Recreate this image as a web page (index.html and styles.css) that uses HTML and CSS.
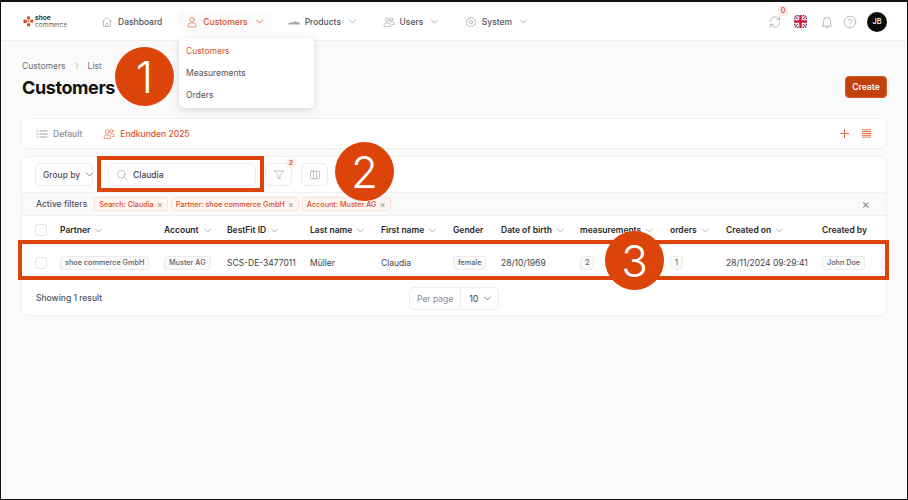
FILE: index.html
```html
<!DOCTYPE html>
<html lang="en">
<head>
<meta charset="utf-8">
<title>Customers</title>
<link rel="stylesheet" href="styles.css">
</head>
<body>
<div class="frame">
  <header class="nav">
    <div class="logo">
      <svg class="logo-mark" viewBox="0 0 12 12" width="11" height="11"><g fill="#e0441a"><rect x="4.500" y="0.500" width="3.200" height="3.200"/><rect x="8" y="4" width="3.200" height="3.200"/><rect x="0.500" y="4" width="3.600" height="3.600"/><rect x="4.500" y="8" width="3.200" height="3.200"/><rect x="4.700" y="4.600" width="2.200" height="2.200" fill="#f08a60"/></g></svg>
      <div class="logo-text"><b>shoe</b><span>commerce</span></div>
    </div>
    <nav class="menu">
      <a class="item">
        <svg class="ic" viewBox="0 0 24 24"><path d="M3 11l9-8 9 8M5 9.500V21h14V9.500M10 21v-6h4v6"/></svg>Dashboard
      </a>
      <a class="item active">
        <svg class="ic" viewBox="0 0 24 24"><circle cx="12" cy="7.500" r="4.500"/><path d="M4 21v-2a5 5 0 0 1 5-5h6a5 5 0 0 1 5 5v2z"/></svg>Customers
        <svg class="chev" viewBox="0 0 12 12"><path d="M2 4l4 4 4-4"/></svg>
      </a>
      <a class="item">
        <svg class="ic shoe" viewBox="0 0 24 24"><path d="M1 17h22v-4l-6-1-3-2-2 1-2 2H6l-5 1z"/></svg>Products
        <svg class="chev" viewBox="0 0 12 12"><path d="M2 4l4 4 4-4"/></svg>
      </a>
      <a class="item">
        <svg class="ic" viewBox="0 0 24 24"><circle cx="8.500" cy="7.500" r="3.800"/><circle cx="17" cy="6" r="3"/><path d="M2 20v-1a5 5 0 0 1 5-5h3a5 5 0 0 1 5 5v1zM15 11.500h3a4.500 4.500 0 0 1 4.500 4.500v1H18"/></svg>Users
        <svg class="chev" viewBox="0 0 12 12"><path d="M2 4l4 4 4-4"/></svg>
      </a>
      <a class="item">
        <svg class="ic" viewBox="0 0 24 24"><circle cx="12" cy="12" r="3.200"/><path d="M12 2.500l2 2.500 3.200-.6 1 3 3 1.100-.6 3.500 1.400 1-1.400 2-.2 2.500-3 .5-1.700 2.500L12 19.800l-3.700 1.200-1.700-2.500-3-.5-.2-2.500-1.400-2 1.400-1-.6-3.500 3-1.100 1-3L10 5z"/></svg>System
        <svg class="chev" viewBox="0 0 12 12"><path d="M2 4l4 4 4-4"/></svg>
      </a>
    </nav>
    <div class="tools">
      <span class="sync">
        <svg class="tool" viewBox="0 0 24 24"><path d="M4 11a8 8 0 0 1 14-5l2 2M20 3v5h-5M20 13a8 8 0 0 1-14 5l-2-2M4 21v-5h5"/></svg>
        <i class="count">0</i>
      </span>
      <svg class="flag" viewBox="0 0 24 24"><defs><clipPath id="fc"><rect width="24" height="24" rx="6"/></clipPath></defs><g clip-path="url(#fc)"><rect width="24" height="24" fill="#23327d"/><path d="M0 0l24 24M24 0L0 24" stroke="#fff" stroke-width="6"/><path d="M0 0l24 24M24 0L0 24" stroke="#d3163a" stroke-width="2"/><path d="M12 0v24M0 12h24" stroke="#fff" stroke-width="8"/><path d="M12 0v24M0 12h24" stroke="#d3163a" stroke-width="4.500"/></g></svg>
      <svg class="tool" viewBox="0 0 24 24"><path d="M6 17V10a6 6 0 0 1 12 0v7l2 2H4zM10 21.500h4"/></svg>
      <svg class="tool" viewBox="0 0 24 24"><circle cx="12" cy="12" r="10"/><path d="M9 9.500a3 3 0 1 1 4.500 2.600c-1 .6-1.500 1.200-1.500 2.400M12 17.500v.5"/></svg>
      <span class="avatar">JB</span>
    </div>
  </header>

  <main class="page">
    <div class="head">
      <div class="titles">
        <div class="crumbs"><span>Customers</span><svg class="crumb-sep" viewBox="0 0 12 12"><path d="M4 2l4 4-4 4"/></svg><span>List</span></div>
        <h1>Customers</h1>
      </div>
      <button class="create">Create</button>
    </div>

    <section class="tabs">
      <a class="tab">
        <svg class="ic list" viewBox="0 0 24 24"><path d="M8 6h14M8 12h14M8 18h14M2 6h2M2 12h2M2 18h2"/></svg>Default
      </a>
      <a class="tab on">
        <svg class="ic" viewBox="0 0 24 24"><circle cx="8.500" cy="7.500" r="3.800"/><circle cx="17" cy="6" r="3"/><path d="M2 20v-1a5 5 0 0 1 5-5h3a5 5 0 0 1 5 5v1zM15 11.500h3a4.500 4.500 0 0 1 4.500 4.500v1H18"/></svg>Endkunden 2025
      </a>
      <span class="tab-actions">
        <svg class="act" viewBox="0 0 12 12"><path d="M6 1.500v9M1.500 6h9"/></svg>
        <svg class="act" viewBox="0 0 12 12"><path d="M1.500 2h9M1.500 4h9M1.500 6h9M1.500 8h9M1.500 10h9"/></svg>
      </span>
    </section>

    <section class="card">
      <div class="toolbar">
        <button class="group">Group by<svg class="chev dark" viewBox="0 0 12 12"><path d="M2 4l4 4 4-4"/></svg></button>
        <label class="search">
          <svg class="ic" viewBox="0 0 24 24"><circle cx="10.500" cy="10.500" r="7.500"/><path d="M16 16l6 6"/></svg>
          <span>Claudia</span>
        </label>
        <button class="square">
          <svg class="ic" viewBox="0 0 24 24"><path d="M3 4h18l-7 8.500V20l-4-2v-5.500z"/></svg>
          <i class="count">2</i>
        </button>
        <button class="square">
          <svg class="ic" viewBox="0 0 24 24"><rect x="3" y="4.500" width="18" height="15" rx="2"/><path d="M9 4.500v15M15 4.500v15"/></svg>
        </button>
      </div>
      <div class="filters">
        <span class="flabel">Active filters</span>
        <span class="chip">Search: Claudia<em>×</em></span>
        <span class="chip">Partner: shoe commerce GmbH<em>×</em></span>
        <span class="chip">Account: Muster AG<em>×</em></span>
        <span class="clear">×</span>
      </div>
      <div class="table">
        <div class="row hdr">
          <span><i class="check"></i></span>
          <span>Partner<svg class="chev" viewBox="0 0 12 12"><path d="M2 4l4 4 4-4"/></svg></span>
          <span>Account<svg class="chev" viewBox="0 0 12 12"><path d="M2 4l4 4 4-4"/></svg></span>
          <span>BestFit ID<svg class="chev" viewBox="0 0 12 12"><path d="M2 4l4 4 4-4"/></svg></span>
          <span>Last name<svg class="chev" viewBox="0 0 12 12"><path d="M2 4l4 4 4-4"/></svg></span>
          <span>First name<svg class="chev" viewBox="0 0 12 12"><path d="M2 4l4 4 4-4"/></svg></span>
          <span>Gender</span>
          <span>Date of birth<svg class="chev" viewBox="0 0 12 12"><path d="M2 4l4 4 4-4"/></svg></span>
          <span>measurements<svg class="chev" viewBox="0 0 12 12"><path d="M2 4l4 4 4-4"/></svg></span>
          <span>orders<svg class="chev" viewBox="0 0 12 12"><path d="M2 4l4 4 4-4"/></svg></span>
          <span>Created on<svg class="chev" viewBox="0 0 12 12"><path d="M2 4l4 4 4-4"/></svg></span>
          <span>Created by</span>
          <span></span>
        </div>
        <div class="row body">
          <span><i class="check"></i></span>
          <span><b class="pill">shoe commerce GmbH</b></span>
          <span><b class="pill">Muster AG</b></span>
          <span>SCS-DE-3477011</span>
          <span>Müller</span>
          <span>Claudia</span>
          <span><b class="pill">female</b></span>
          <span>28/10/1969</span>
          <span><b class="pill">2</b></span>
          <span><b class="pill">1</b></span>
          <span>28/11/2024 09:29:41</span>
          <span><b class="pill">John Doe</b></span>
          <span><b class="pill stub"></b></span>
        </div>
      </div>
      <div class="foot">
        <span class="showing">Showing 1 result</span>
        <div class="pager"><span class="pp">Per page</span><span class="pv">10<svg class="chev dark" viewBox="0 0 12 12"><path d="M2 4l4 4 4-4"/></svg></span></div>
      </div>
    </section>
  </main>

  <div class="dropdown">
    <a class="on">Customers</a>
    <a>Measurements</a>
    <a>Orders</a>
  </div>

  <div class="mark box-search"></div>
  <div class="mark box-row"></div>
  <div class="bubble b1">1</div>
  <div class="bubble b2">2</div>
  <div class="bubble b3">3</div>
</div>
</body>
</html>
```

FILE: styles.css
```css
* { box-sizing: border-box; }
html, body { margin: 0; padding: 0; }
body { font-family: Inter, "Liberation Sans", sans-serif; color: #3f3f46; background: #fff; }
svg { fill: none; stroke: currentColor; stroke-linecap: round; stroke-linejoin: round; flex: none; }
.frame { position: relative; width: 908px; height: 500px; background: #fafafa; border: 1px solid #111; border-top-width: 2px; overflow: hidden; font-size: 8.500px; }

.nav { display: flex; align-items: center; height: 39px; padding: 1px 20px 0 22px; background: #fff; border-bottom: 1px solid #efefef; }
.logo { display: flex; align-items: center; gap: 1px; width: 78px; }
.logo-mark { stroke: none; }
.logo-mark rect { stroke: none; }
.logo-text { display: flex; flex-direction: column; font-size: 6.500px; line-height: 6.500px; color: #333; }
.logo-text b { font-weight: 700; }
.logo-text span { font-weight: 300; }
.menu { display: flex; align-items: center; gap: 16px; }
.item { display: flex; align-items: center; gap: 5px; height: 21px; color: #52525b; font-weight: 500; font-size: 8.500px; }
.item.active { color: #d9502a; background: #fafafa; border-radius: 6px; padding-left: 8px; }
.ic { width: 12px; height: 12px; stroke-width: 1.300; color: #a1a1aa; }
.item.active .ic { color: #e0643c; }
.shoe { color: #a1a1aa; fill: #a1a1aa; stroke: none; }
.chev { width: 9px; height: 9px; stroke-width: 1.100; color: #a1a1aa; margin-left: 4px; }
.item .chev { margin-left: 2px; margin-right: 9.500px; }
.item.active .chev { color: #d9502a; margin-right: 8px; }
.chev.dark { color: #71717a; }

.tools { display: flex; align-items: center; gap: 9px; margin-left: auto; }
.tool { width: 14px; height: 14px; stroke-width: 1.300; color: #a8a8ae; }
.flag { width: 13px; height: 13px; stroke: none; margin-right: 4px; }
.flag path { fill: none; }
.sync { position: relative; display: flex; margin-right: 3px; }
.count { position: absolute; top: -9px; right: -6px; min-width: 10px; height: 10px; border-radius: 3px; background: #fdeee8; color: #d9502a; font-size: 7px; font-style: normal; font-weight: 600; line-height: 10px; text-align: center; }
.avatar { width: 20px; height: 20px; border-radius: 50%; background: #0a0a0a; color: #fff; font-size: 7.500px; font-weight: 500; display: flex; align-items: center; justify-content: center; margin-left: 1px; }

.page { padding: 0 20px; }
.head { display: flex; justify-content: space-between; align-items: flex-end; height: 57px; margin-bottom: 20px; }
.titles { padding-left: 1px; }
.crumbs { display: flex; align-items: center; gap: 6px; color: #71717a; font-size: 8.500px; margin-bottom: 6px; }
.crumb-sep { width: 8px; height: 8px; color: #a1a1aa; stroke-width: 1.100; margin: 0 1px; }
h1 { margin: 0 0 -1px; font-size: 18px; line-height: 22px; font-weight: 700; color: #111; letter-spacing: -0.400px; }
.create { height: 22px; width: 42px; padding: 0; border: 1px solid #d9542a; border-radius: 4px; background: #c2410c; color: #fff; font: 600 8.500px Inter, sans-serif; }

.tabs { display: flex; align-items: center; height: 31px; padding: 0 14px; gap: 21px; background: #fff; border: 1px solid #f0f0f0; border-radius: 7px; margin-bottom: 7px; }
.tab { display: flex; align-items: center; gap: 5px; color: #8b8b92; font-weight: 500; font-size: 8.500px; }
.tab.on { color: #d9502a; font-weight: 500; }
.tab.on .ic { color: #e0643c; }
.list { color: #71717a; }
.tab-actions { margin-left: auto; display: flex; gap: 11px; color: #e0643c; }
.act { width: 11px; height: 11px; stroke-width: 1; }

.card { background: #fff; border: 1px solid #efefef; border-radius: 7px; overflow: hidden; height: 160px; }
.toolbar { display: flex; align-items: center; height: 36px; padding: 0 13px; border-bottom: 1px solid #f0f0f0; }
.group { display: flex; align-items: center; gap: 1px; height: 23px; width: 58px; padding: 0 0 0 7px; border: 1px solid #ececec; border-radius: 5px; background: #fff; color: #52525b; font: 500 8.500px Inter, sans-serif; white-space: nowrap; margin-right: 15px; }
.search { display: flex; align-items: center; gap: 5px; width: 148px; height: 23px; padding: 0 7px; border: 1px solid #ececec; border-radius: 6px; color: #3f3f46; font-weight: 500; margin-right: 9px; }
.square { position: relative; display: flex; align-items: center; justify-content: center; width: 27px; height: 23px; border: 1px solid #ececec; border-radius: 5px; background: #fff; padding: 0; margin-right: 9px; }
.square .count { top: -6px; right: -5px; }
.filters { display: flex; align-items: center; gap: 3px; height: 23px; padding: 0 14px; background: #fafafa; border-bottom: 1px solid #efefef; }
.flabel { font-weight: 500; font-size: 8.500px; color: #52525b; margin-right: 4px; }
.chip { display: flex; align-items: center; gap: 3px; height: 14px; padding: 0 4px; background: #fef4f0; border: 1px solid #f8e2d9; border-radius: 3px; color: #d9502a; font-size: 7.250px; font-weight: 500; white-space: nowrap; }
.chip em { font-style: normal; font-size: 9px; color: #a1a1aa; line-height: 1; }
.clear { margin-left: auto; margin-right: 2px; color: #8b8b92; font-size: 13px; line-height: 1; }

.table { overflow: hidden; }
.row { display: grid; grid-template-columns: 25px 104px 63px 83px 71px 72px 48px 79px 90px 56px 96px 59px 30px; width: 889px; align-items: center; padding-left: 13px; border-bottom: 1px solid #f2f2f2; }
.row > span { display: flex; align-items: center; white-space: nowrap; }
.hdr { height: 29px; font-weight: 600; font-size: 8.500px; color: #27272a; }
.body { height: 35px; padding-top: 1px; color: #3f3f46; font-size: 8.500px; }
.check { display: block; width: 12px; height: 12px; border: 1px solid #e4e4e7; border-radius: 3px; background: #fff; }
.pill { display: inline-block; padding: 0 4px; height: 14px; line-height: 12px; border: 1px solid #ececec; border-radius: 3px; background: #fafafa; color: #63636b; font-size: 7.250px; font-weight: 500; }
.stub { width: 20px; }
.foot { position: relative; display: flex; align-items: center; height: 36px; padding: 0 14px; }
.showing { color: #52525b; font-size: 8.500px; font-weight: 500; }
.pager { position: absolute; left: 387px; top: 7px; display: flex; height: 23px; border: 1px solid #ececec; border-radius: 5px; background: #fff; }
.pp { display: flex; align-items: center; padding: 0 7px; color: #8b8b92; border-right: 1px solid #ececec; }
.pv { display: flex; align-items: center; padding: 0 6px 0 8px; color: #3f3f46; font-size: 9px; }

.dropdown { position: absolute; left: 178px; top: 36px; width: 135px; height: 70px; padding: 2px 7px; background: #fff; border-radius: 5px; box-shadow: 0 2px 8px rgba(0,0,0,.14); display: flex; flex-direction: column; justify-content: space-around; color: #52525b; font-size: 8.500px; font-weight: 400; }
.dropdown .on { color: #d9502a; }

.mark { position: absolute; border: 4px solid #dd4409; }
.box-search { left: 96px; top: 154px; width: 167px; height: 36px; }
.box-row { left: 17px; top: 238px; width: 871px; height: 40px; }
.bubble { position: absolute; display: flex; align-items: center; justify-content: center; width: 59px; height: 59px; border-radius: 50%; background: #dd4409; color: #fff; font-size: 44px; font-weight: 300; line-height: 1; }
.b1 { left: 114px; top: 45px; }
.b2 { left: 334px; top: 140px; }
.b3 { left: 604px; top: 229px; }
```
